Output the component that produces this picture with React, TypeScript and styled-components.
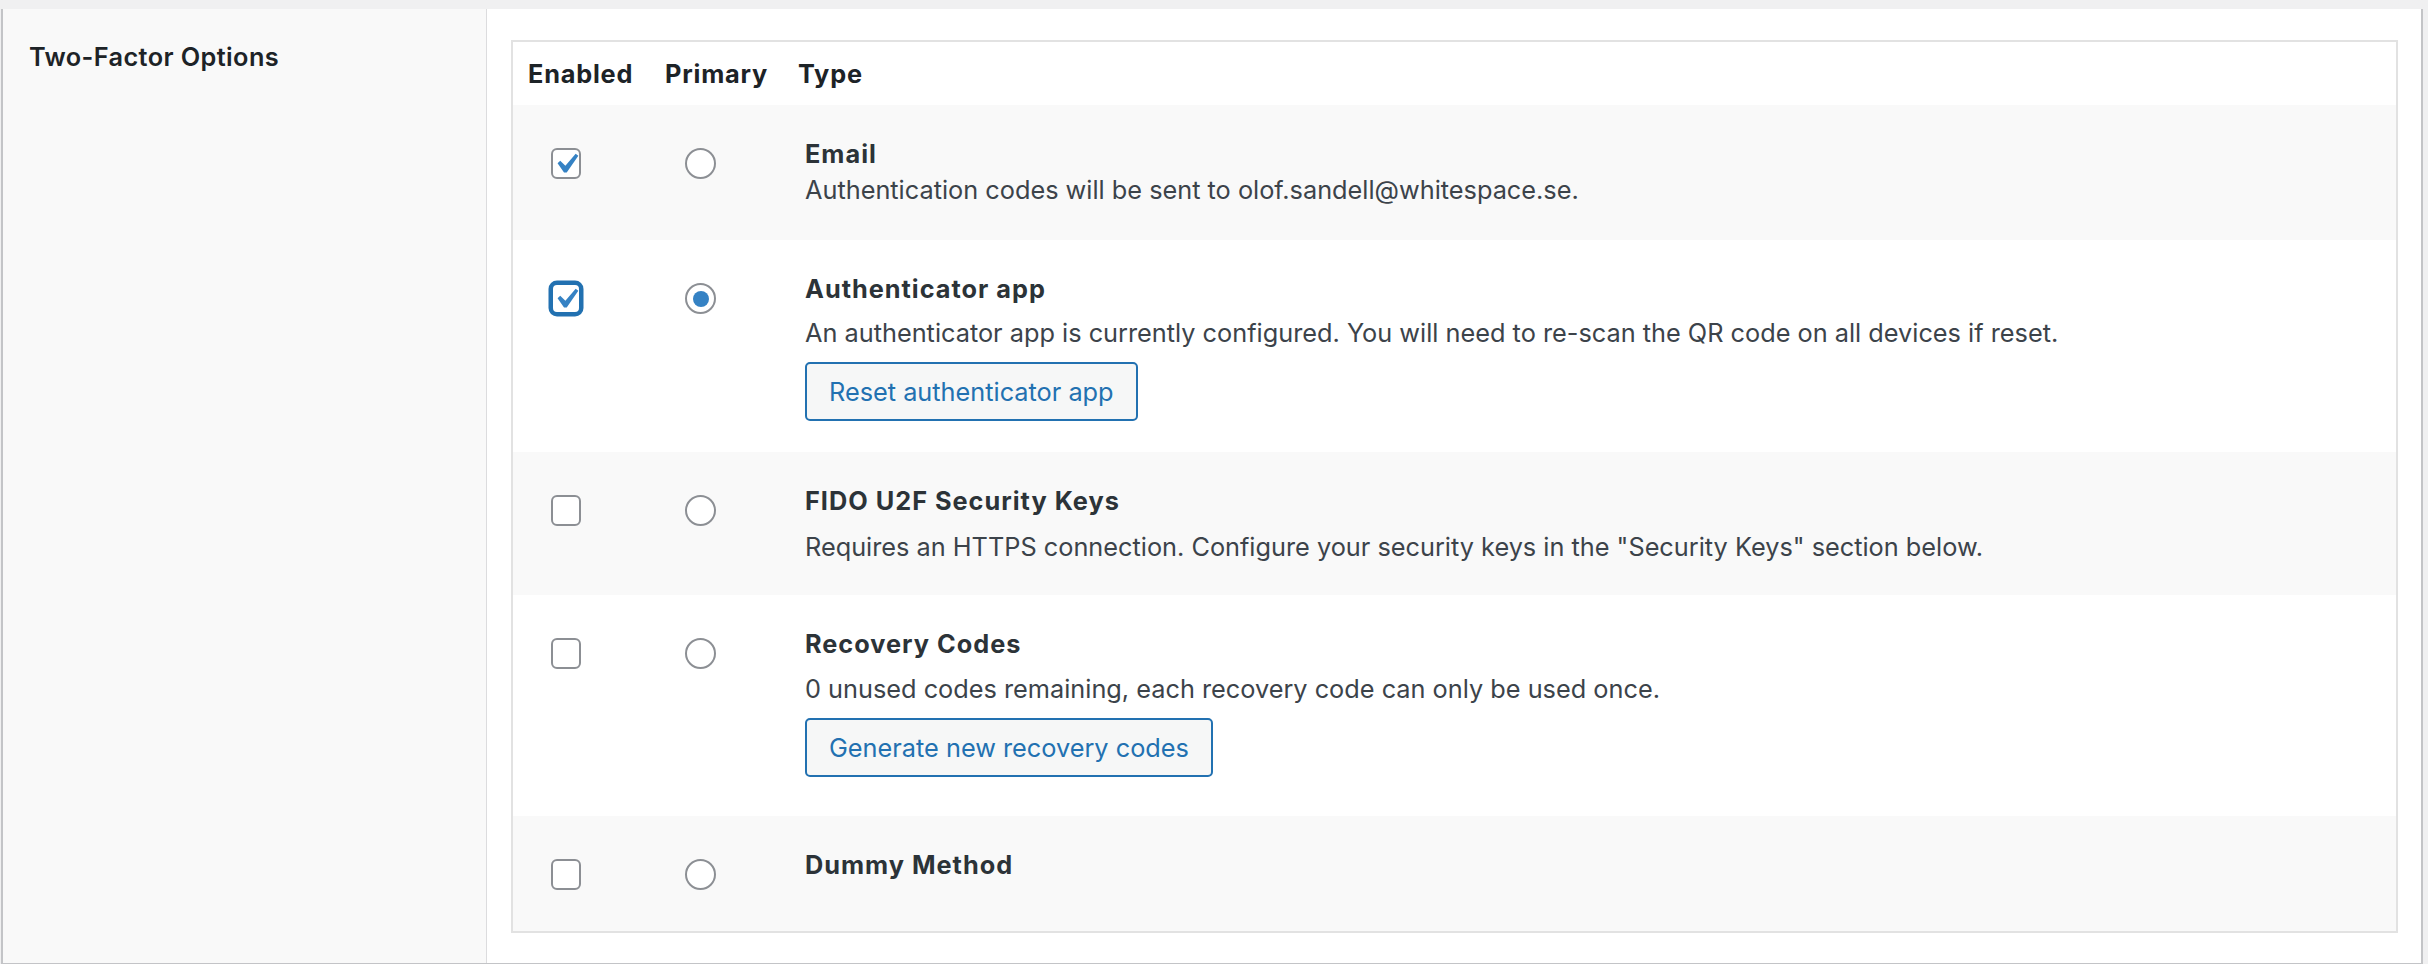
import React from 'react';
import styled, { createGlobalStyle } from 'styled-components';

const GlobalStyle = createGlobalStyle`
  html, body {
    margin: 0;
    padding: 0;
    background: #f0f0f1;
  }
  body {
    font-family: Inter, "Liberation Sans", Arial, sans-serif;
    font-size: 25.3px;
    line-height: 36px;
    color: #3c434a;
  }
`;

const Page = styled.div`
  padding: 9px 5px 0 1px;
`;

const Panel = styled.div`
  display: grid;
  grid-template-columns: 484px 1fr;
  border: 2px solid #c3c4c7;
  border-top: 0;
  background: #fff;
`;

const Side = styled.div`
  background: #f9f9f9;
  border-right: 1px solid #dcdcde;
  padding: 30px 26px;
`;

const Label = styled.div`
  font-weight: 600;
  letter-spacing: 0.4px;
  color: #1d2327;
`;

const Content = styled.div`
  padding: 31px 23px 30px 24px;
`;

const Table = styled.div`
  border: 2px solid #e2e2e2;
`;

const columns = '137px 133px 1fr';

const HeadRow = styled.div`
  display: grid;
  grid-template-columns: ${columns};
  padding: 14px 0 13px;
  background: #fff;
`;

const HeadCell = styled.div`
  padding-left: 15px;
  font-weight: 700;
  letter-spacing: 0.8px;
  color: #1d2327;
  white-space: nowrap;
`;

const MethodRow = styled.div<{ $striped: boolean; $bottom: number }>`
  display: grid;
  grid-template-columns: ${columns};
  padding: 31px 0 ${(p) => p.$bottom}px;
  background: ${(p) => (p.$striped ? '#f9f9f9' : '#fff')};
`;

const ControlCell = styled.div<{ $left: number }>`
  padding: 12px 0 0 ${(p) => p.$left}px;
`;

const TypeCell = styled.div`
  padding-left: 22px;
`;

const Title = styled.div`
  font-weight: 700;
  letter-spacing: 1px;
  color: #2c3338;
`;

const Desc = styled.p<{ $gap: number }>`
  margin: ${(p) => p.$gap}px 0 0;
`;

const Button = styled.button`
  display: inline-block;
  margin-top: 11px;
  height: 59px;
  padding: 0 22px;
  font-family: inherit;
  font-size: 25.3px;
  color: #2271b1;
  background: #f6f7f7;
  border: 2px solid #2271b1;
  border-radius: 5px;
  cursor: pointer;
`;

const Box = styled.span<{ $focused: boolean }>`
  display: flex;
  align-items: center;
  justify-content: center;
  box-sizing: border-box;
  width: 30px;
  height: 31px;
  background: #fff;
  border: 2px solid ${(p) => (p.$focused ? '#2271b1' : '#8c8f94')};
  border-radius: 6px;
  box-shadow: ${(p) => (p.$focused ? '0 0 0 2.5px #2271b1' : 'none')};
  overflow: visible;

  svg {
    flex: none;
  }
`;

const Round = styled.span`
  display: flex;
  align-items: center;
  justify-content: center;
  box-sizing: border-box;
  width: 31px;
  height: 31px;
  background: #fff;
  border: 2px solid #8c8f94;
  border-radius: 50%;
`;

const Dot = styled.span`
  width: 16px;
  height: 16px;
  border-radius: 50%;
  background: #3582c4;
`;

const Checkbox = ({ checked, focused }: { checked: boolean; focused?: boolean }) => (
  <Box $focused={!!focused}>
    {checked && (
      <svg width="40" height="40" viewBox="0 0 20 20">
        <path d="M14.83 4.89l1.34.94-5.81 8.38H9.02L5.78 9.67l1.34-1.25 2.57 2.4z" fill="#3582c4" />
      </svg>
    )}
  </Box>
);

const Radio = ({ checked }: { checked: boolean }) => <Round>{checked && <Dot />}</Round>;

interface Method {
  title: string;
  desc?: string;
  descGap?: number;
  button?: string;
  enabled: boolean;
  primary: boolean;
  focused?: boolean;
  bottom: number;
}

const methods: Method[] = [
  {
    title: 'Email',
    desc: 'Authentication codes will be sent to olof.sandell@whitespace.se.',
    descGap: 0,
    enabled: true,
    primary: false,
    bottom: 32,
  },
  {
    title: 'Authenticator app',
    desc: 'An authenticator app is currently configured. You will need to re-scan the QR code on all devices if reset.',
    descGap: 8,
    button: 'Reset authenticator app',
    enabled: true,
    primary: true,
    focused: true,
    bottom: 31,
  },
  {
    title: 'FIDO U2F Security Keys',
    desc: 'Requires an HTTPS connection. Configure your security keys in the "Security Keys" section below.',
    descGap: 10,
    enabled: false,
    primary: false,
    bottom: 30,
  },
  {
    title: 'Recovery Codes',
    desc: '0 unused codes remaining, each recovery code can only be used once.',
    descGap: 9,
    button: 'Generate new recovery codes',
    enabled: false,
    primary: false,
    bottom: 39,
  },
  {
    title: 'Dummy Method',
    enabled: false,
    primary: false,
    bottom: 41,
  },
];

export default function App() {
  return (
    <>
      <GlobalStyle />
      <Page>
        <Panel>
          <Side>
            <Label>Two-Factor Options</Label>
          </Side>
          <Content>
            <Table>
              <HeadRow>
                <HeadCell>Enabled</HeadCell>
                <HeadCell>Primary</HeadCell>
                <HeadCell>Type</HeadCell>
              </HeadRow>
              {methods.map((m, i) => (
                <MethodRow key={m.title} $striped={i % 2 === 0} $bottom={m.bottom}>
                  <ControlCell $left={38}>
                    <Checkbox checked={m.enabled} focused={m.focused} />
                  </ControlCell>
                  <ControlCell $left={35}>
                    <Radio checked={m.primary} />
                  </ControlCell>
                  <TypeCell>
                    <Title>{m.title}</Title>
                    {m.desc && <Desc $gap={m.descGap ?? 0}>{m.desc}</Desc>}
                    {m.button && <Button type="button">{m.button}</Button>}
                  </TypeCell>
                </MethodRow>
              ))}
            </Table>
          </Content>
        </Panel>
      </Page>
    </>
  );
}
